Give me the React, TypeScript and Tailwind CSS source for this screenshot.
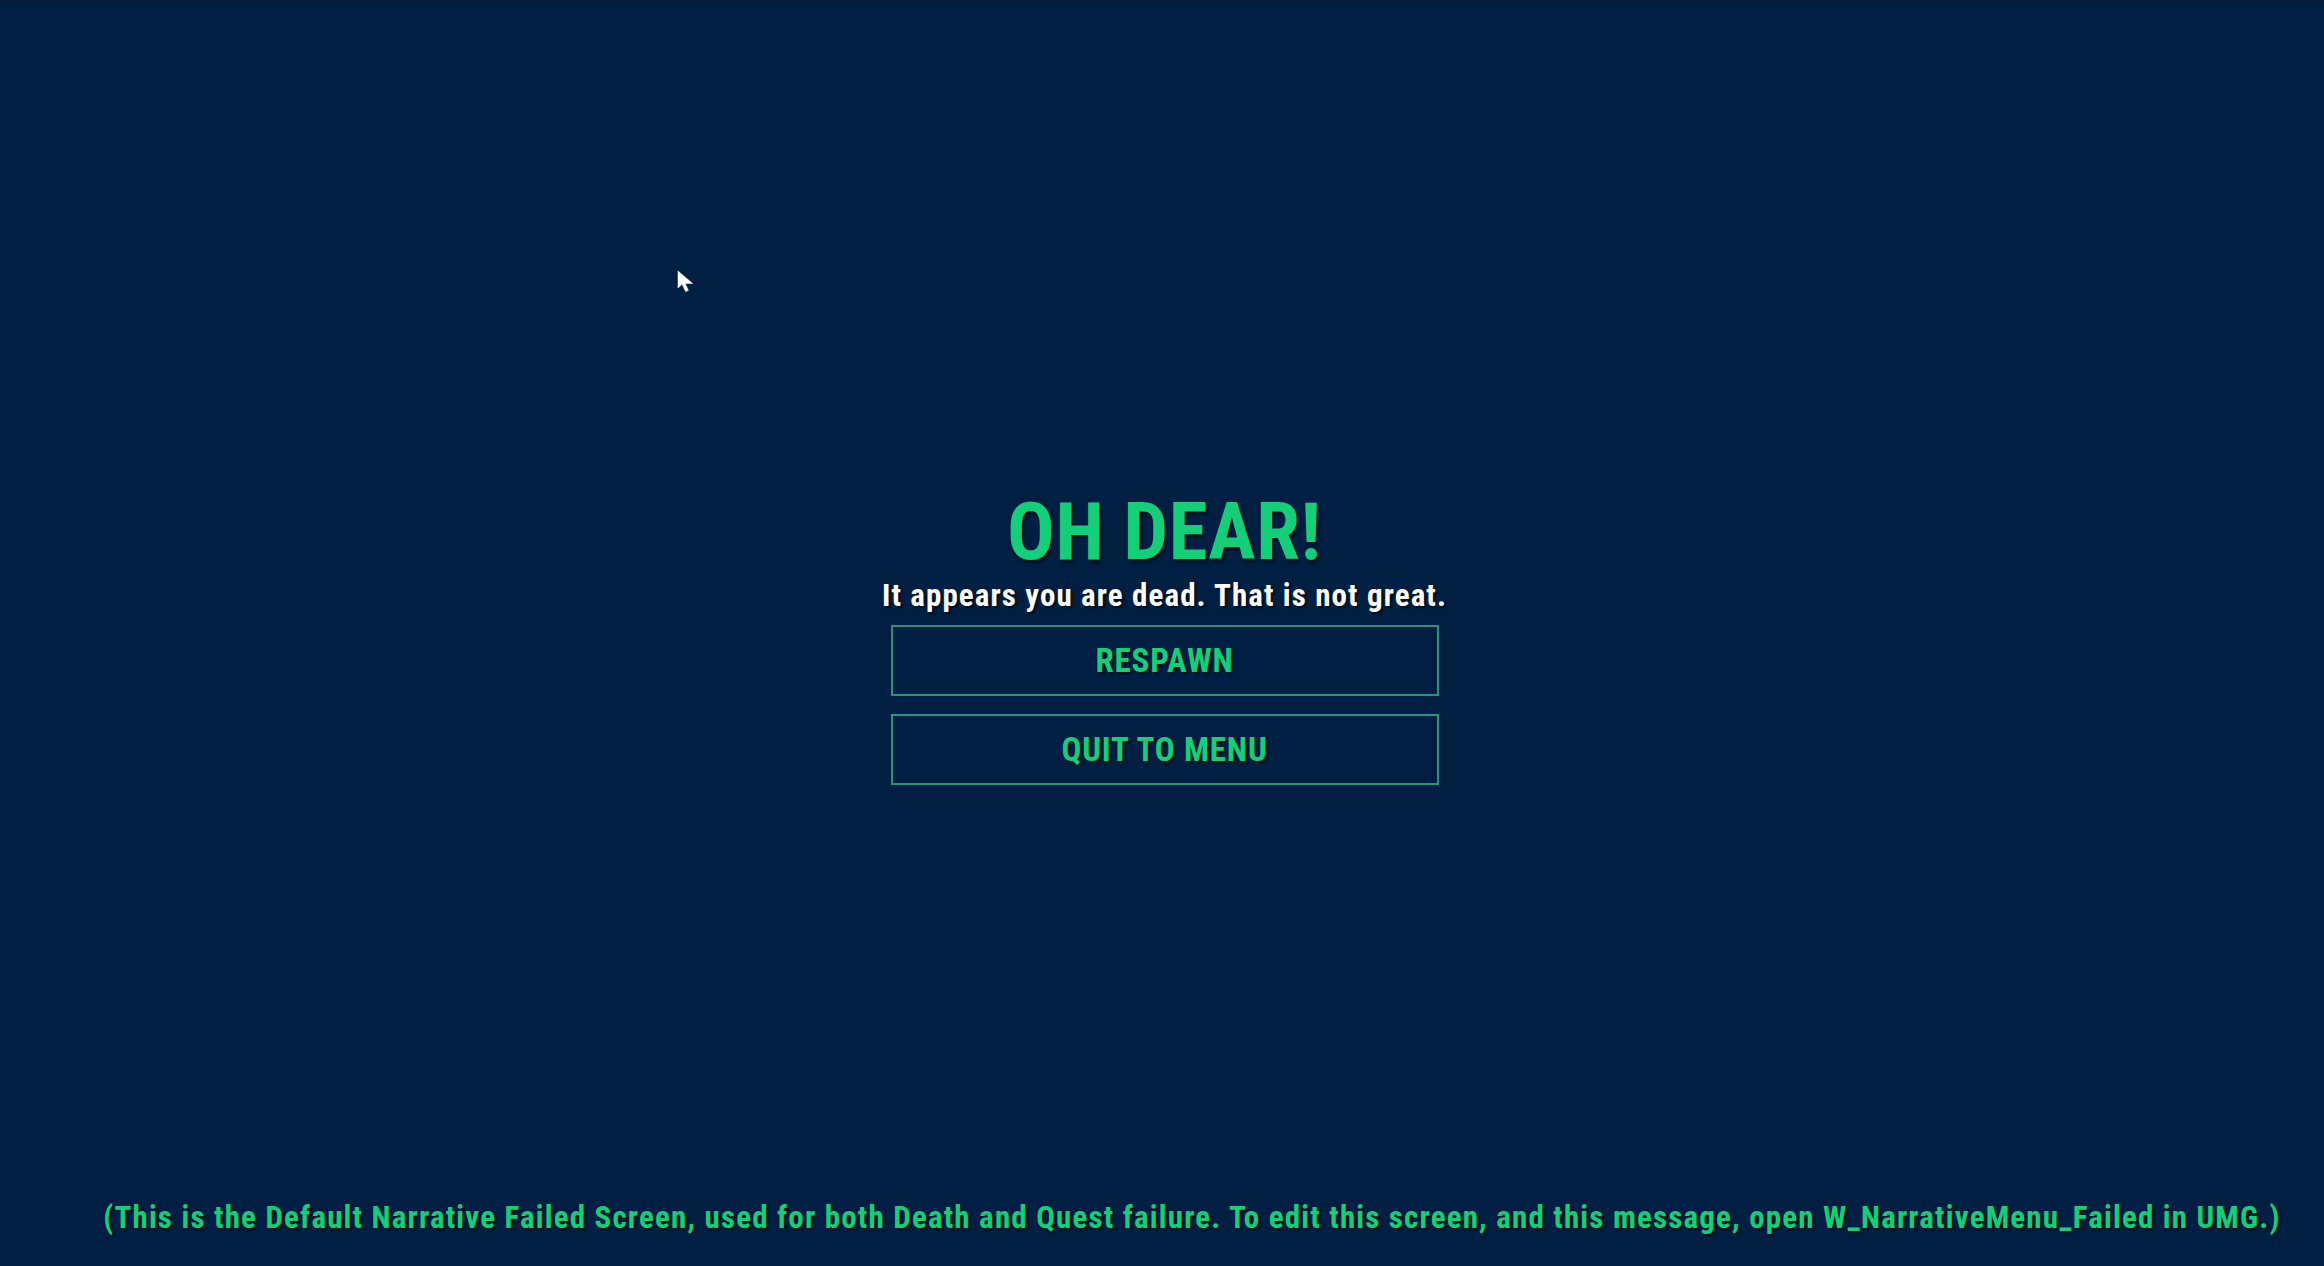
import React from 'react';

const Cursor: React.FC = () => (
  <svg width="18" height="23" viewBox="0 0 18 23" className="absolute left-[677px] top-[268px]">
    <path d="M1 1 L1 18 L5.2 14.2 L8.6 21.6 L11.4 20.4 L8.2 13.4 L15.6 13.4 Z" fill="#ffffff" stroke="#eef2f7" strokeWidth="0.6" strokeLinejoin="round" />
  </svg>
);

const MenuButton: React.FC<{ label: string }> = ({ label }) => (
  <button className="w-[548px] h-[71px] flex items-center justify-center border-2 border-[#2a937d] bg-transparent text-[#13cf78] text-[33px] leading-none font-bold tracking-[0.85px] [text-shadow:2px_2px_2px_rgba(0,0,0,0.55)]">
    {label}
  </button>
);

export default function App() {
  return (
    <div className="relative w-full h-screen overflow-hidden bg-[#001f42] border-t-2 border-[#0b1a34] font-['Roboto',sans-serif] font-stretch-condensed flex flex-col">
      <Cursor />

      <div className="flex flex-col items-center pt-[491px] pl-[5px]">
        <h1 className="text-[79px] leading-none font-bold tracking-[0.7px] text-[#13cf78] [text-shadow:2px_3px_3px_rgba(0,0,0,0.5)]">
          OH DEAR!
        </h1>
        <p className="mt-[8px] text-[31px] leading-none font-bold tracking-[1.1px] text-white [text-shadow:2px_2px_2px_rgba(0,0,0,0.6)]">
          It appears you are dead. That is not great.
        </p>
        <div className="mt-[14px] flex flex-col gap-[18px]">
          <MenuButton label="RESPAWN" />
          <MenuButton label="QUIT TO MENU" />
        </div>
      </div>

      <div className="mt-auto pb-[33px] pl-[60px] flex justify-center">
        <p className="text-[31px] leading-none font-bold tracking-[1.17px] text-[#13cf78] whitespace-nowrap [text-shadow:2px_2px_2px_rgba(0,0,0,0.55)]">
          (This is the Default Narrative Failed Screen, used for both Death and Quest failure. To edit this screen, and this message, open W_NarrativeMenu_Failed in UMG.)
        </p>
      </div>
    </div>
  );
}
